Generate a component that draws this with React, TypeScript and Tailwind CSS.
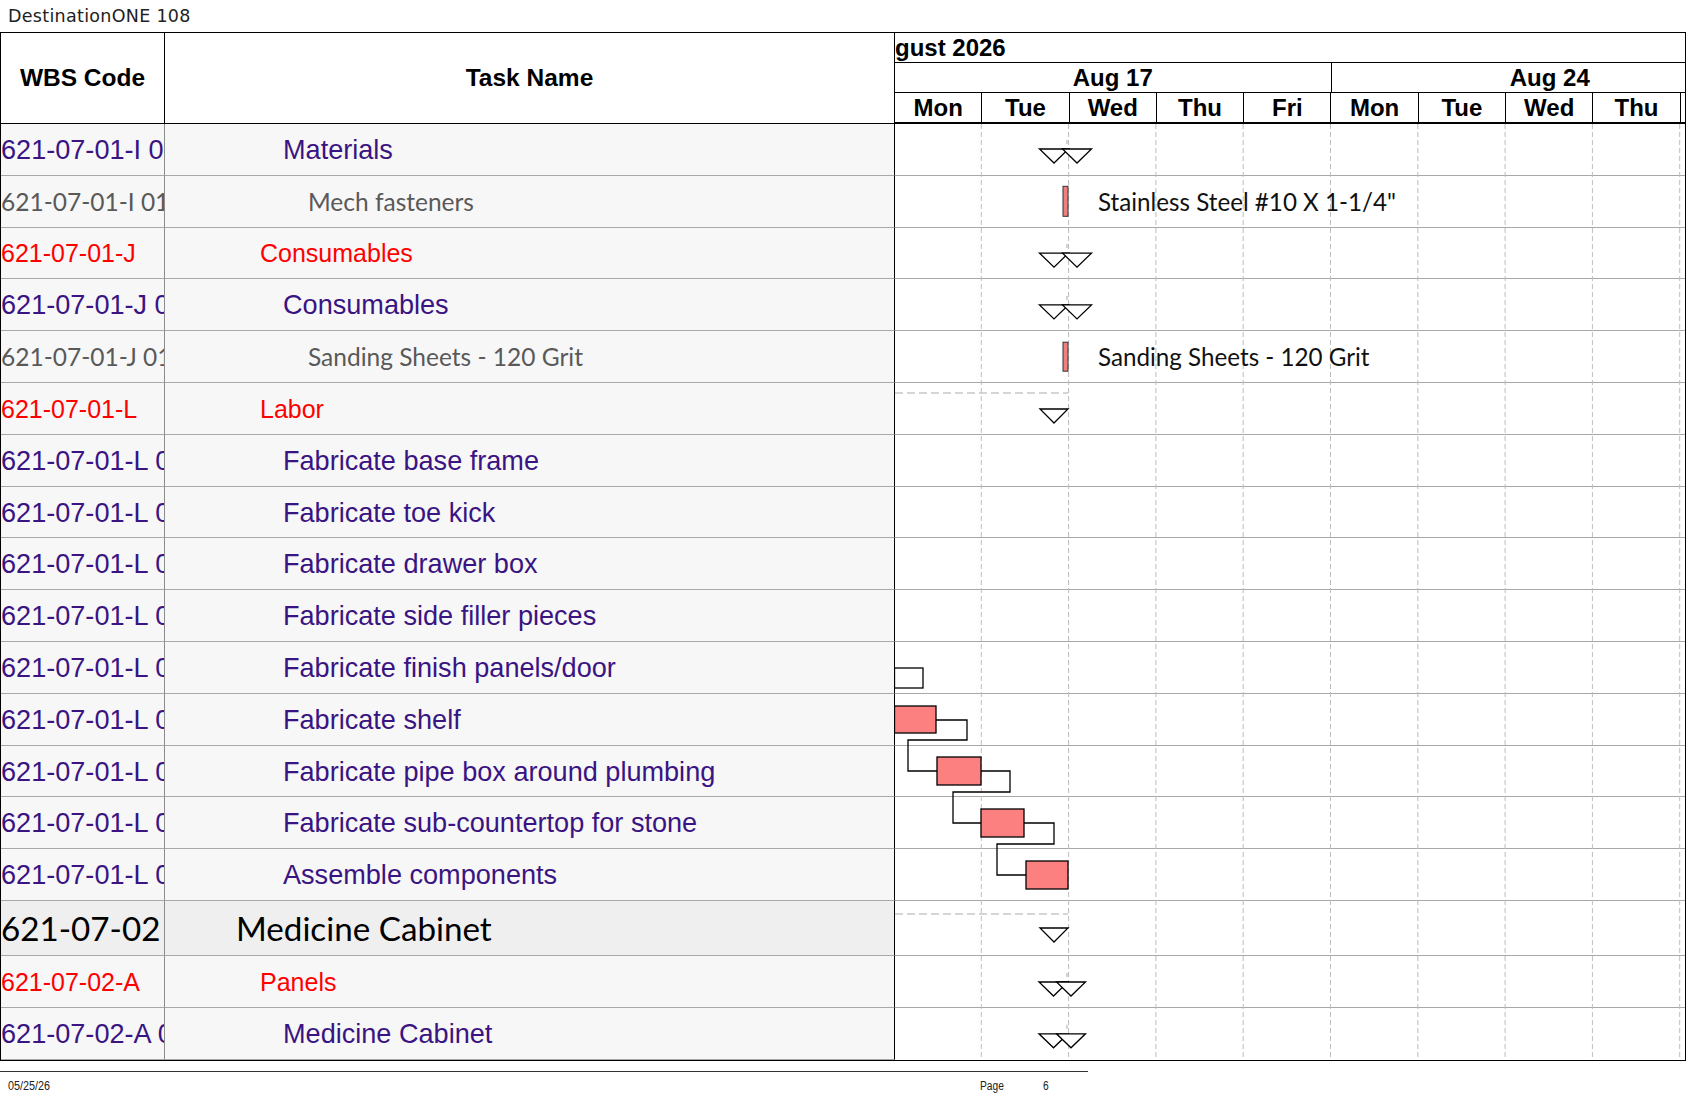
type RowType = "p" | "g" | "r" | "b";

const rows: { code: string; name: string; t: RowType }[] = [
    { code: "621-07-01-I 01", name: "Materials", t: "p" },
    { code: "621-07-01-I 01", name: "Mech fasteners", t: "g" },
    { code: "621-07-01-J", name: "Consumables", t: "r" },
    { code: "621-07-01-J 01", name: "Consumables", t: "p" },
    { code: "621-07-01-J 01", name: "Sanding Sheets - 120 Grit", t: "g" },
    { code: "621-07-01-L", name: "Labor", t: "r" },
    { code: "621-07-01-L 01", name: "Fabricate base frame", t: "p" },
    { code: "621-07-01-L 02", name: "Fabricate toe kick", t: "p" },
    { code: "621-07-01-L 03", name: "Fabricate drawer box", t: "p" },
    { code: "621-07-01-L 04", name: "Fabricate side filler pieces", t: "p" },
    { code: "621-07-01-L 05", name: "Fabricate finish panels/door", t: "p" },
    { code: "621-07-01-L 06", name: "Fabricate shelf", t: "p" },
    { code: "621-07-01-L 07", name: "Fabricate pipe box around plumbing", t: "p" },
    { code: "621-07-01-L 08", name: "Fabricate sub-countertop for stone", t: "p" },
    { code: "621-07-01-L 09", name: "Assemble components", t: "p" },
    { code: "621-07-02", name: "Medicine Cabinet", t: "b" },
    { code: "621-07-02-A", name: "Panels", t: "r" },
    { code: "621-07-02-A 01", name: "Medicine Cabinet", t: "p" },
];

const textCls: Record<RowType, string> = {
    p: "text-[27.1px] text-[#3a1482] font-['Liberation_Sans',Arial,sans-serif]",
    g: "text-[24.5px] text-[#595959] font-['Lato',sans-serif]",
    r: "text-[25px] text-[#ff0000] font-['Liberation_Sans',Arial,sans-serif]",
    b: "text-[33.2px] text-black font-['Lato',sans-serif]",
};

const indent: Record<RowType, string> = {
    p: "pl-[118px]",
    g: "pl-[143px]",
    r: "pl-[95px]",
    b: "pl-[71px]",
};

const days = ["Mon", "Tue", "Wed", "Thu", "Fri", "Mon", "Tue", "Wed", "Thu"];

// row tops in page coords (body starts at y=124)
const ROW_H = 51.8;
const rowTop = (i: number) => 124 + (i <= 15 ? i * ROW_H : 15 * ROW_H + 55 + (i - 16) * ROW_H);

function DoubleTri({ y, a = 1054, b = 1077, w = 14.5 }: { y: number; a?: number; b?: number; w?: number }) {
    return (
        <g fill="white" stroke="black" strokeWidth="1.3">
            <line x1={1067} y1={y - 9} x2={1067} y2={y - 5} stroke="#bbb" />
            <path d={`M${a - w} ${y} L${a + w} ${y} L${a} ${y + 14} Z`} />
            <path d={`M${b - w} ${y} L${b + w} ${y} L${b} ${y + 14} Z`} />
        </g>
    );
}

function Tri({ y }: { y: number }) {
    return <path d={`M1040 ${y} L1068 ${y} L1054 ${y + 14} Z`} fill="white" stroke="black" strokeWidth="1.3" />;
}

function GanttDrawing() {
    const grid = Array.from({ length: 9 }, (_, k) => 894 + 87.3 * (k + 1));
    const bar = "#fc8080";
    return (
        <svg
            className="absolute top-0 left-[893px] pointer-events-none"
            width={791}
            height={936}
            viewBox="894 124 791 936"
        >
            {grid.map((x) => (
                <line key={x} x1={x} y1={124} x2={x} y2={1060} stroke="#bdbdbd" strokeDasharray="5 3" />
            ))}

            <DoubleTri y={rowTop(0) + 25} />
            <rect x={1063} y={rowTop(1) + 10.5} width={5} height={30} fill="#f08080" stroke="#333" />
            <DoubleTri y={rowTop(2) + 25.5} />
            <DoubleTri y={rowTop(3) + 25.5} />
            <rect x={1063} y={rowTop(4) + 11} width={5} height={29} fill="#f08080" stroke="#333" />

            <line x1={895} y1={rowTop(5) + 10} x2={1068} y2={rowTop(5) + 10} stroke="#c8c8c8" strokeWidth="1.5" strokeDasharray="8 4" />
            <Tri y={rowTop(5) + 26} />

            <rect x={894.5} y={rowTop(10) + 26} width={28.5} height={20} fill="white" stroke="black" strokeWidth="1.3" />

            <g fill="none" stroke="black" strokeWidth="1.3">
                <polyline points="936,720 967,720 967,740 908,740 908,771 937,771" />
                <polyline points="981,771 1010,771 1010,792 953,792 953,823 981,823" />
                <polyline points="1024,823 1054,823 1054,844 997,844 997,875 1026,875" />
            </g>
            <g fill={bar} stroke="black" strokeWidth="1.3">
                <rect x={894.5} y={706} width={41.5} height={27} />
                <rect x={937} y={757} width={44} height={28} />
                <rect x={981} y={809} width={43} height={28} />
                <rect x={1026} y={861} width={42} height={28} />
            </g>

            <line x1={895} y1={rowTop(15) + 13} x2={1068} y2={rowTop(15) + 13} stroke="#c8c8c8" strokeWidth="1.5" strokeDasharray="8 4" />
            <Tri y={rowTop(15) + 27} />

            <DoubleTri y={rowTop(16) + 26} a={1053.5} b={1071} w={14.5} />
            <DoubleTri y={rowTop(17) + 26} a={1053.5} b={1071} w={14.5} />
        </svg>
    );
}

function GanttLabel({ row, text }: { row: number; text: string }) {
    return (
        <span
            className="absolute left-[1097px] h-[51.8px] pt-[1px] flex items-center whitespace-nowrap text-[24.2px] text-[#111] font-['Lato',sans-serif]"
            style={{ top: rowTop(row) - 124 }}
        >
            {text}
        </span>
    );
}

export default function App() {
    return (
        <div className="w-[1687px] h-[1097px] bg-white overflow-hidden font-['Liberation_Sans',Arial,sans-serif]">
            <div className="h-[32px] flex items-center pl-[8px] text-[17.5px] text-[#222] tracking-[0.3px] font-['DejaVu_Sans',sans-serif]">
                DestinationONE 108
            </div>

            <div className="w-[1686px] border-t border-l border-r border-b border-black">
                {/* header */}
                <div className="flex h-[91px]">
                    <div className="w-[164px] shrink-0 h-full border-r border-b border-black flex items-center justify-center text-[24.5px] font-bold text-black">
                        WBS Code
                    </div>
                    <div className="w-[730px] shrink-0 h-full border-r border-b border-black flex items-center justify-center text-[24.5px] font-bold text-black">
                        Task Name
                    </div>
                    <div className="flex-1 min-w-0 h-full flex flex-col border-b-2 border-black text-[24px] font-bold text-black">
                        <div className="h-[30px] shrink-0 border-b border-black overflow-hidden flex items-center">
                            <span className="ml-[-32px] whitespace-nowrap">August 2026</span>
                        </div>
                        <div className="h-[30px] shrink-0 border-b border-black flex">
                            <div className="w-[436.5px] shrink-0 border-r border-black flex items-center justify-center">
                                Aug 17
                            </div>
                            <div className="flex-1 min-w-0 overflow-hidden">
                                <div className="w-[436.5px] h-full flex items-center justify-center">Aug 24</div>
                            </div>
                        </div>
                        <div className="flex-1 flex overflow-hidden">
                            {days.map((d, i) => (
                                <div
                                    key={i}
                                    className="w-[87.3px] shrink-0 border-r border-black flex items-center justify-center"
                                >
                                    {d}
                                </div>
                            ))}
                            <div className="flex-1" />
                        </div>
                    </div>
                </div>

                {/* body */}
                <div className="relative">
                    {rows.map((r, i) => (
                        <div key={i} className={`flex ${r.t === "b" ? "h-[55px]" : "h-[51.8px]"}`}>
                            <div
                                className={`w-[164px] shrink-0 pt-[2px] border-r border-b border-r-[#8c8c8c] border-b-[#a8a8a8] flex items-center overflow-hidden whitespace-nowrap ${
                                    r.t === "b" ? "bg-[#efefef]" : "bg-[#f7f7f7]"
                                } ${textCls[r.t]}`}
                            >
                                {r.code}
                            </div>
                            <div
                                className={`w-[730px] shrink-0 pt-[2px] border-r border-b border-r-black border-b-[#a8a8a8] flex items-center overflow-hidden whitespace-nowrap ${
                                    r.t === "b" ? "bg-[#efefef]" : "bg-[#f7f7f7]"
                                } ${indent[r.t]} ${textCls[r.t]}`}
                            >
                                {r.name}
                            </div>
                            <div className={`flex-1 bg-white ${i === rows.length - 1 ? "" : "border-b border-[#a8a8a8]"}`} />
                        </div>
                    ))}
                    <GanttDrawing />
                    <GanttLabel row={1} text={'Stainless Steel #10 X 1-1/4"'} />
                    <GanttLabel row={4} text="Sanding Sheets - 120 Grit" />
                </div>
            </div>

            <div className="w-[1088px] mt-[10px] border-t border-[#333] flex items-start pt-[5px] text-[12px] text-[#222]">
                <span className="w-[980px] shrink-0 pl-[8px]">
                    <span className="inline-block scale-x-[0.9] origin-left">05/25/26</span>
                </span>
                <span className="w-[63px] shrink-0">
                    <span className="inline-block scale-x-[0.85] origin-left">Page</span>
                </span>
                <span className="inline-block scale-x-[0.85] origin-left">6</span>
            </div>
        </div>
    );
}
